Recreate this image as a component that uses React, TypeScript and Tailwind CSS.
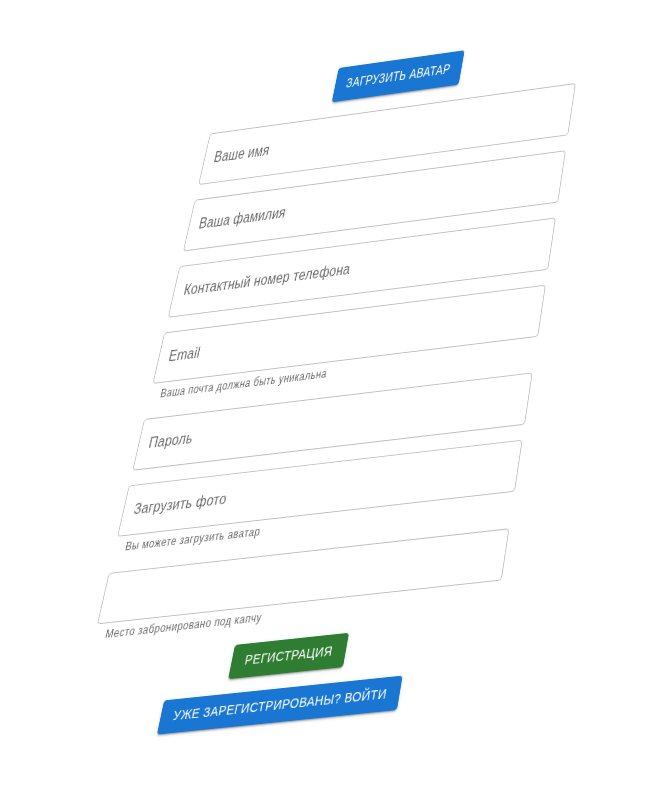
import React, { ReactNode } from "react";

type Point = [number, number];

const FORM_WIDTH = 500;
const FIELDS_TOP = 52.5;
const FIELDS_BOTTOM = 586.34;

// Corners of the tilted block of fields.
const TOP_LEFT: Point = [210.1, 133];
const TOP_RIGHT: Point = [575.9, 82.5];
const BOTTOM_RIGHT: Point = [501.6, 581];
const BOTTOM_LEFT: Point = [97, 624.9];

const BUTTON_HEIGHT = 36.5;
const FIELD_HEIGHT = 56;
const HELPER_FIELD_HEIGHT = 78.92;

function mix(a: Point, b: Point, t: number): Point {
  return [a[0] + (b[0] - a[0]) * t, a[1] + (b[1] - a[1]) * t];
}

// Matrix that tilts a row lying between top and top + height in the flat form.
function tilt(top: number, height: number): string {
  const from = (top - FIELDS_TOP) / (FIELDS_BOTTOM - FIELDS_TOP);
  const to = (top + height - FIELDS_TOP) / (FIELDS_BOTTOM - FIELDS_TOP);
  const [[x0, y0], [x1, y1], [x2, y2], [x3, y3]] = [
    mix(TOP_LEFT, BOTTOM_LEFT, from),
    mix(TOP_RIGHT, BOTTOM_RIGHT, from),
    mix(TOP_RIGHT, BOTTOM_RIGHT, to),
    mix(TOP_LEFT, BOTTOM_LEFT, to),
  ].map(([x, y]) => [x, y - top]);
  const dx1 = x1 - x2;
  const dx2 = x3 - x2;
  const dy1 = y1 - y2;
  const dy2 = y3 - y2;
  const sx = x0 - x1 + x2 - x3;
  const sy = y0 - y1 + y2 - y3;
  const det = dx1 * dy2 - dx2 * dy1;
  const g = (sx * dy2 - dx2 * sy) / det;
  const h = (dx1 * sy - sx * dy1) / det;
  return `matrix3d(${[
    (x1 - x0 + g * x1) / FORM_WIDTH, (y1 - y0 + g * y1) / FORM_WIDTH, 0, g / FORM_WIDTH,
    (x3 - x0 + h * x3) / height, (y3 - y0 + h * y3) / height, 0, h / height,
    0, 0, 1, 0,
    x0, y0, 0, 1,
  ].join(",")})`;
}

function Row({ top, height, children }: { top: number; height: number; children: ReactNode }) {
  return (
    <div className="flex w-full origin-top-left flex-col items-center" style={{ transform: tilt(top, height) }}>
      {children}
    </div>
  );
}

function Button({ top, children, color = "bg-[#1976d2]" }: { top: number; children: string; color?: string }) {
  return (
    <Row top={top} height={BUTTON_HEIGHT}>
      <button
        type="button"
        className={`${color} ml-1 rounded px-4 py-1.5 text-sm leading-[24.5px] font-medium tracking-[0.02857em] whitespace-nowrap text-white uppercase shadow-[0_3px_1px_-2px_rgba(0,0,0,0.2),0_2px_2px_0_rgba(0,0,0,0.14),0_1px_5px_0_rgba(0,0,0,0.12)]`}
      >
        {children}
      </button>
    </Row>
  );
}

function Field({ top, label, helper }: { top: number; label?: string; helper?: string }) {
  return (
    <Row top={top} height={helper ? HELPER_FIELD_HEIGHT : FIELD_HEIGHT}>
      <div className="h-14 w-full rounded border border-black/[0.26] px-[13px] py-[15px] text-base leading-[23px] tracking-[0.016em] text-black/60">
        {label}
      </div>
      {helper && (
        <p className="mt-[3px] w-full px-3.5 text-xs leading-[19.92px] tracking-[0.04em] text-black/60">
          {helper}
        </p>
      )}
    </Row>
  );
}

export default function App() {
  return (
    <main className="h-[802px] w-[658px] overflow-hidden bg-white font-['Liberation_Sans',Arial,sans-serif]">
      <form className="flex w-[500px] flex-col gap-4">
        <Button top={0}>Загрузить аватар</Button>
        <Field top={52.5} label="Ваше имя" />
        <Field top={124.5} label="Ваша фамилия" />
        <Field top={196.5} label="Контактный номер телефона" />
        <Field top={268.5} label="Email" helper="Ваша почта должна быть уникальна" />
        <Field top={363.42} label="Пароль" />
        <Field top={435.42} label="Загрузить фото" helper="Вы можете загрузить аватар" />
        <Field top={530.34} helper="Место забронировано под капчу" />
        <Button top={625.26} color="bg-[#2e7d32]">Регистрация</Button>
        <Button top={677.76}>Уже зарегистрированы? Войти</Button>
      </form>
    </main>
  );
}
